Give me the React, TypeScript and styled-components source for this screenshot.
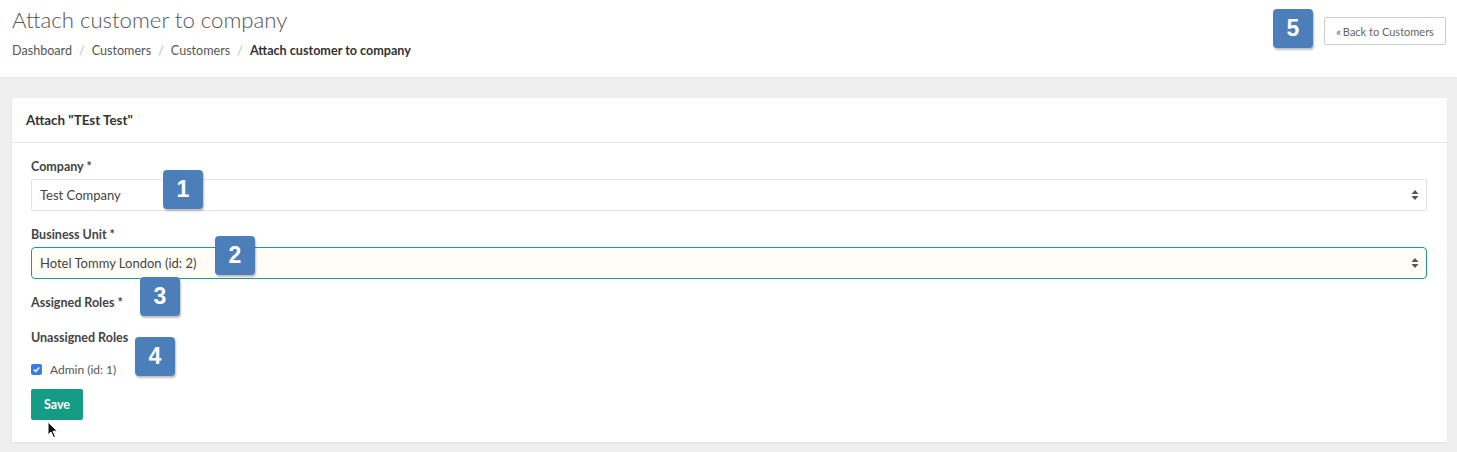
import React from 'react';
import styled, { createGlobalStyle } from 'styled-components';

const GlobalStyle = createGlobalStyle`
  html, body {
    margin: 0;
    padding: 0;
    background: #efefef;
    font-family: Lato, "Open Sans", "Liberation Sans", sans-serif;
  }
`

type Mark = { n: number; x: number; y: number }

// numbered callouts drawn on top of the screenshot
const marks: Mark[] = [
  { n: 1, x: 163, y: 170 },
  { n: 2, x: 215, y: 236 },
  { n: 3, x: 140, y: 277 },
  { n: 4, x: 135, y: 337 },
  { n: 5, x: 1273, y: 9 },
]

const SelectArrows: React.FC = () => (
  <svg width="8" height="12" viewBox="0 0 8 12">
    <path d="M4 1 L7.5 5 L0.5 5 Z" fill="#555" />
    <path d="M4 11 L7.5 7 L0.5 7 Z" fill="#555" />
  </svg>
)

const App: React.FC = () => {
  return (
    <Page>
      <GlobalStyle />
      <Header>
        <div>
          <Title>Attach customer to company</Title>
          <Crumbs>
            <Crumb>Dashboard</Crumb>
            <Sep>/</Sep>
            <Crumb>Customers</Crumb>
            <Sep>/</Sep>
            <Crumb>Customers</Crumb>
            <Sep>/</Sep>
            <Crumb $active>Attach customer to company</Crumb>
          </Crumbs>
        </div>
        <BackButton><Chev>«</Chev>Back to Customers</BackButton>
      </Header>

      <Main>
        <Panel>
          <PanelHeading>Attach "TEst Test"</PanelHeading>
          <PanelBody>
            <Label $top={16}>Company *</Label>
            <Select>
              <span>Test Company</span>
              <SelectArrows />
            </Select>

            <Label $top={16}>Business Unit *</Label>
            <Select $focused>
              <span>Hotel Tommy London (id: 2)</span>
              <SelectArrows />
            </Select>

            <Label $top={16}>Assigned Roles *</Label>
            <Label $top={19}>Unassigned Roles</Label>

            <CheckRow>
              <CheckBox>
                <svg width="9" height="9" viewBox="0 0 9 9">
                  <path d="M1.8 4.6 L3.7 6.5 L7.2 2.4" stroke="#fff" strokeWidth="1.5" fill="none" />
                </svg>
              </CheckBox>
              <span>Admin (id: 1)</span>
            </CheckRow>

            <SaveButton>Save</SaveButton>
          </PanelBody>
        </Panel>
      </Main>

      {marks.map(m => (
        <Badge key={m.n} style={{ left: m.x, top: m.y }}>{m.n}</Badge>
      ))}

      <Cursor width="12" height="18" viewBox="0 0 12 18">
        <path d="M1 1 L1 14 L4 11 L6.5 16.5 L8.5 15.6 L6 10.2 L10.2 10.2 Z" fill="#111" stroke="#fff" strokeWidth="1" />
      </Cursor>
    </Page>
  );
}

export default App;

const Page = styled.div`
  position: relative;
  width: 1457px;
  height: 452px;
  overflow: hidden;
  background: #efefef;
`

const Header = styled.div`
  height: 77px;
  box-sizing: border-box;
  background: #fff;
  padding: 6px 11px 0 12px;
  display: flex;
  justify-content: space-between;
  align-items: flex-start;
  box-shadow: 0 1px 2px rgba(0,0,0,0.04);
`

const Title = styled.h1`
  margin: 0;
  font-size: 22.2px;
  line-height: 28px;
  font-weight: 300;
  color: #555;
`

const Crumbs = styled.div`
  margin-top: 8px;
  display: flex;
  align-items: center;
  font-size: 12.6px;
  line-height: 18px;
  color: #555;
`

const Crumb = styled.span<{ $active?: boolean }>`
  font-weight: ${p => (p.$active ? 700 : 400)};
  color: ${p => (p.$active ? '#333' : '#555')};
`

const Sep = styled.span`
  color: #bbb;
  padding: 0 7px;
`

const BackButton = styled.button`
  margin-top: 11px;
  height: 28px;
  width: 122px;
  padding: 0;
  background: #fff;
  border: 1px solid #ccc;
  border-radius: 2px;
  font-family: inherit;
  font-size: 11px;
  color: #666;
  display: flex;
  align-items: center;
  justify-content: center;
`

const Chev = styled.span`
  font-size: 11px;
  margin-right: 2px;
`

const Main = styled.div`
  padding: 21px 10px 10px 12px;
`

const Panel = styled.div`
  background: #fff;
  height: 344px;
  box-shadow: 0 1px 2px rgba(0,0,0,0.06);
`

const PanelHeading = styled.div`
  height: 45px;
  box-sizing: border-box;
  padding: 0 14px;
  display: flex;
  align-items: center;
  border-bottom: 1px solid #e6e6e6;
  font-size: 13.4px;
  font-weight: 700;
  color: #333;
`

const PanelBody = styled.div`
  padding: 0 20px 0 19px;
`

const Label = styled.div<{ $top: number }>`
  margin-top: ${p => p.$top}px;
  font-size: 12.5px;
  line-height: 16px;
  font-weight: 700;
  color: #444;
`

const Select = styled.div<{ $focused?: boolean }>`
  margin-top: 4px;
  height: 32px;
  box-sizing: border-box;
  padding: 0 7px 0 8px;
  display: flex;
  align-items: center;
  justify-content: space-between;
  font-size: 13px;
  color: #444;
  border: 1px solid ${p => (p.$focused ? '#1f9c85' : '#e2e2e2')};
  border-radius: ${p => (p.$focused ? '4px' : '2px')};
  background: ${p => (p.$focused ? '#fffdf6' : '#fff')};
`

const CheckRow = styled.div`
  margin-top: 15px;
  display: flex;
  align-items: center;
  gap: 8px;
  font-size: 12px;
  color: #555;
  height: 16px;
`

const CheckBox = styled.span`
  width: 11px;
  height: 11px;
  border-radius: 2px;
  background: #3a7be8;
  display: flex;
  align-items: center;
  justify-content: center;
`

const SaveButton = styled.button`
  margin-top: 12px;
  width: 52px;
  height: 31px;
  border: none;
  border-radius: 2px;
  background: #159c84;
  color: #fff;
  font-family: inherit;
  font-size: 12.5px;
  font-weight: 700;
  padding: 0;
`

const Badge = styled.div`
  position: absolute;
  width: 40px;
  height: 39px;
  border-radius: 4px;
  background: #4c7fba;
  box-shadow: 1px 2px 2px rgba(0,0,0,0.25);
  color: #fff;
  font-family: "Liberation Sans", Arial, sans-serif;
  font-weight: 700;
  font-size: 23px;
  display: flex;
  align-items: center;
  justify-content: center;
`

const Cursor = styled.svg`
  position: absolute;
  left: 47px;
  top: 421px;
`
